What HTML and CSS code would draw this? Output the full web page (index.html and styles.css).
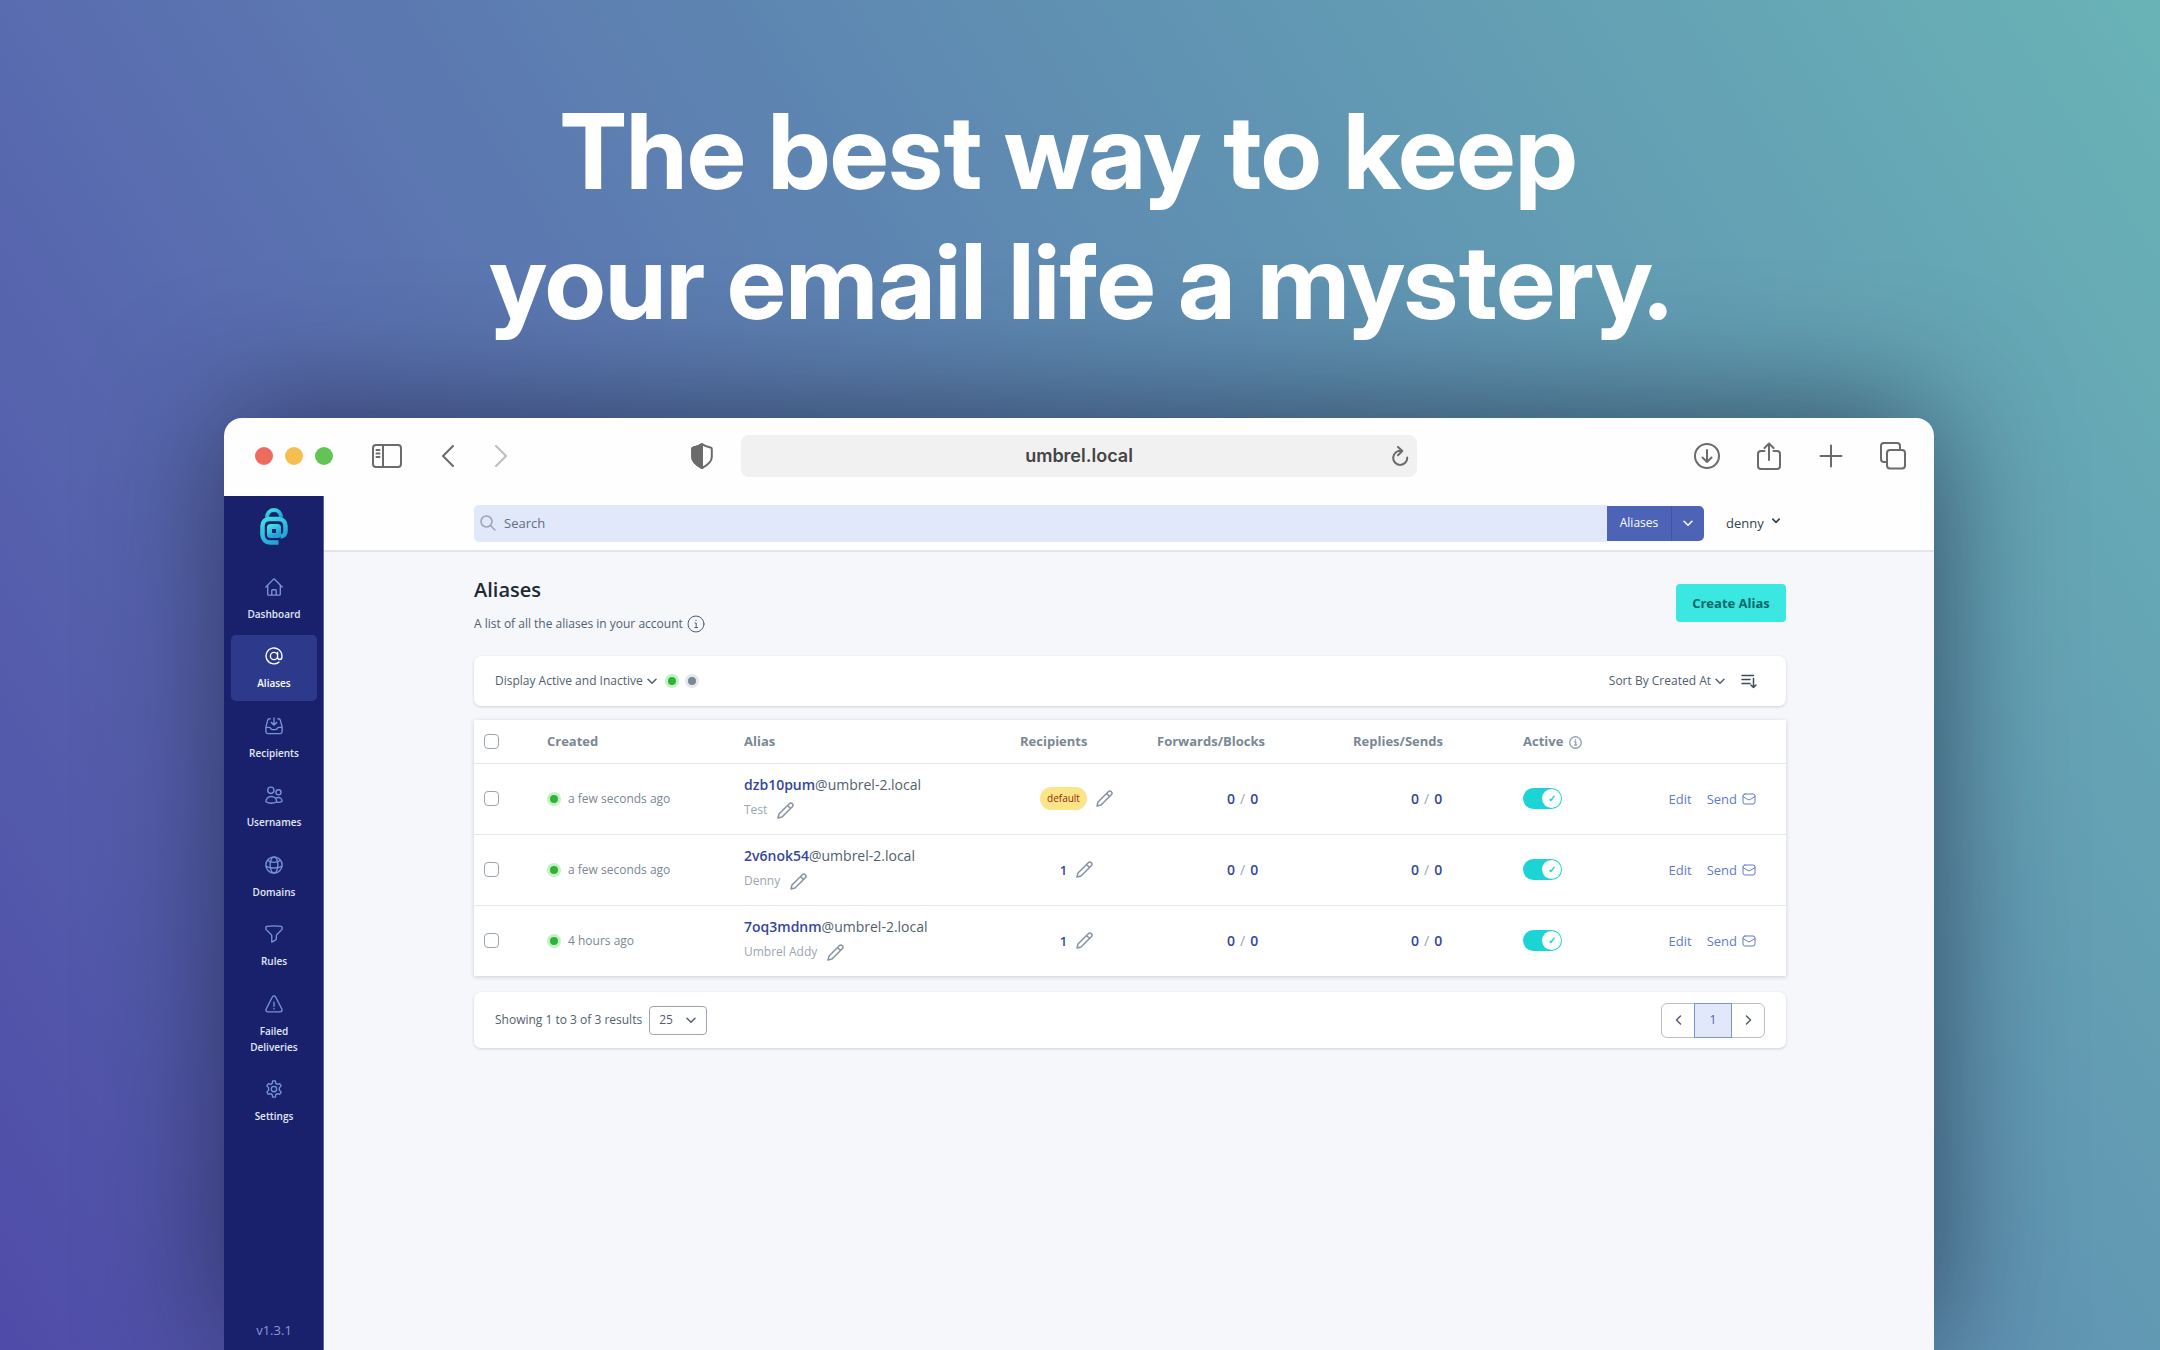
FILE: index.html
```html
<!DOCTYPE html>
<html lang="en">
<head>
<meta charset="utf-8">
<meta name="viewport" content="width=device-width, initial-scale=1">
<title>Aliases</title>
<link rel="stylesheet" href="styles.css">
</head>
<body>
<svg class="sprite" aria-hidden="true">
  <symbol id="pencil" viewBox="0 0 17 17"><path d="M1 16l1-4L12.300 1.700a2 2 0 0 1 3 3L5 15z M11 4l2.300 2.300"/></symbol>
  <symbol id="chevron" viewBox="0 0 10 7"><path d="M1 1.200l4 4 4-4"/></symbol>
  <symbol id="mail" viewBox="0 0 14 12"><rect x="1" y="1" width="12" height="10" rx="2"/><path d="M1 3.500l4.800 3q1.200.7 2.400 0L13 3.500"/></symbol>
  <symbol id="info" viewBox="0 0 18 18"><circle cx="9" cy="9" r="8"/><path d="M8 8h1.200v4.500M7.800 12.500h2.800M9 5.300v.4"/></symbol>
</svg>
<header class="hero">
  <h1 class="headline">The best way to keep&nbsp;<br>your email life a mystery.</h1>
</header>
<div class="browser">
  <div class="toolbar">
    <div class="controls">
      <div class="lights"><i class="light red"></i><i class="light amber"></i><i class="light green"></i></div>
      <div class="nav-buttons">
        <button class="tool" aria-label="Sidebar"><svg width="30" height="24" viewBox="0 0 30 24"><rect x="1" y="1" width="28" height="22" rx="3"/><path d="M11 1v22M4.500 6h3M4.500 9.500h3M4.500 13h3"/></svg></button>
        <button class="tool" aria-label="Back"><svg width="14" height="24" viewBox="0 0 14 24"><path d="M12 2L2 12l10 10"/></svg></button>
        <button class="tool forward" aria-label="Forward"><svg width="14" height="24" viewBox="0 0 14 24"><path d="M2 2l10 10L2 22"/></svg></button>
      </div>
      <button class="tool shield" aria-label="Privacy report"><svg width="22" height="26" viewBox="0 0 22 26"><path d="M11 1.200C8 3.200 5 4 2.500 4.500 1.500 4.700 1.200 5 1.200 6v8c0 5 5 8.500 9.800 11 4.800-2.500 9.800-6 9.800-11V6c0-1-.3-1.300-1.300-1.500C17 4 14 3.200 11 1.200z"/><path class="solid" d="M11 1.200C8 3.200 5 4 2.500 4.500 1.500 4.700 1.200 5 1.200 6v8c0 5 5 8.500 9.800 11z"/></svg></button>
    </div>
    <div class="address">
      <span class="url">umbrel.local</span>
      <button class="tool reload" aria-label="Reload"><svg width="18" height="20" viewBox="0 0 18 20"><path d="M10.500 5A7 7 0 1 0 16.200 11.500M7 1l4.300 4-4.300 4.200"/></svg></button>
    </div>
    <div class="actions">
      <button class="tool" aria-label="Downloads"><svg width="26" height="28" viewBox="0 0 26 28"><circle cx="13" cy="14" r="12"/><path d="M13 8v12M8.500 15.500L13 20l4.500-4.500"/></svg></button>
      <button class="tool" aria-label="Share"><svg width="26" height="28" viewBox="0 0 26 28"><path d="M8.500 9H5a3 3 0 0 0-3 3v12a3 3 0 0 0 3 3h16a3 3 0 0 0 3-3V12a3 3 0 0 0-3-3h-3.500M13 18V1.500M8.500 6L13 1.500 17.500 6"/></svg></button>
      <button class="tool" aria-label="New tab"><svg width="26" height="28" viewBox="0 0 26 28"><path d="M13 3.500v21M2.500 14h21"/></svg></button>
      <button class="tool" aria-label="Tabs"><svg width="26" height="28" viewBox="0 0 26 28"><path d="M7 20H4a3 3 0 0 1-3-3V4a3 3 0 0 1 3-3h13a3 3 0 0 1 3 3v3"/><rect x="7" y="8" width="18" height="18.500" rx="3"/></svg></button>
    </div>
  </div>
  <div class="app">
    <aside class="sidebar">
      <svg class="logo" width="28" height="37" viewBox="0 0 28 37" aria-label="Logo"><defs><linearGradient id="brand" x1="0" y1="0" x2=".6" y2="1"><stop offset="0" stop-color="#40e0e0"/><stop offset="1" stop-color="#22a3d8"/></linearGradient></defs><g stroke="url(#brand)" stroke-linecap="butt"><path stroke-width="4" d="M7 9.500C7 5 10 2 14 2s7 3 7 7.500"/><path stroke-width="4.500" d="M18.500 34.500H10.500C5.500 34.500 2.500 31 2.500 26.500V18c0-4.500 3-7 7-7h9c4.500 0 7 3 7 7v5c0 3.500-2 5.500-5 5.500"/><rect x="9.500" y="18.500" width="9" height="9" rx="1" stroke-width="5"/></g></svg>
      <nav class="menu">
        <a class="item" href="#"><svg viewBox="0 0 20 20"><path d="M1 10l8.300-8.500a1 1 0 0 1 1.400 0L19 10M3 8.200V18a1 1 0 0 0 1 1h12a1 1 0 0 0 1-1V8.200M7.500 19v-5a1 1 0 0 1 1-1h3a1 1 0 0 1 1 1v5"/></svg>Dashboard</a>
        <a class="item current" href="#"><svg viewBox="0 0 20 20"><path d="M14 10a4 4 0 1 1-8 0 4 4 0 0 1 8 0zM14 6v5.500a2.400 2.400 0 0 0 4.800 0V10A8.800 8.800 0 1 0 15.500 16.800"/></svg>Aliases</a>
        <a class="item" href="#"><svg viewBox="0 0 20 20"><path d="M6 2H5a2 2 0 0 0-2 1.500L1 11v5.500a2 2 0 0 0 2 2h14a2 2 0 0 0 2-2V11l-2-7.500A2 2 0 0 0 15 2h-1M10 1v7.500M7 6l3 3 3-3M1 11.500h3.500c1 0 1.500.5 2 1.300s1.200 1.200 2 1.200h3c.8 0 1.500-.4 2-1.200s1-1.300 2-1.300H19"/></svg>Recipients</a>
        <a class="item" href="#"><svg viewBox="0 0 20 20"><circle cx="6.500" cy="4.800" r="3.500"/><circle cx="15" cy="7" r="2.800"/><path d="M1 17.500c0-3.500 2.500-5.800 6-5.800s6 2.300 6 5.800c-3.500 2-8.500 2-12 0zM12.500 13.200c3.500-1.200 6.500.3 6.500 4-1.700 1-4 1.200-6 .8"/></svg>Usernames</a>
        <a class="item" href="#"><svg viewBox="0 0 20 20"><circle cx="10" cy="10" r="9"/><ellipse cx="10" cy="10" rx="4.300" ry="9"/><path d="M1.200 11.500c5 2.400 12.600 2.400 17.600 0M3 5c4.500 2.700 9.500 2.700 14 0"/></svg>Domains</a>
        <a class="item" href="#"><svg viewBox="0 0 20 20"><path d="M10 1c3 0 5.500.2 8 .6.600.1 1 .6 1 1.200v1c0 .7-.3 1.400-.8 1.900l-4.700 4.500c-.6.5-.9 1.200-.9 2v2.800c0 1-.5 1.700-1.400 2.200L7.500 19v-6.800c0-.8-.3-1.500-.9-2L1.800 5.700C1.300 5.200 1 4.500 1 3.800v-1c0-.6.400-1.100 1-1.200C4.500 1.200 7 1 10 1z"/></svg>Rules</a>
        <a class="item" href="#"><svg viewBox="0 0 20 20"><path d="M8.300 2L1.300 15.500C.6 17 1.500 18.800 3.200 18.800h13.600c1.700 0 2.600-1.800 1.900-3.300L11.700 2a2 2 0 0 0-3.400 0zM10 8v4.500M10 15v.5"/></svg>Failed<br>Deliveries</a>
        <a class="item" href="#"><svg viewBox="0 0 20 20"><circle cx="10" cy="10" r="3"/><path d="M8.500 1h3l.5 2.800 1.600 1L16.300 4l1.600 2.500-1.900 2.200v2.600l1.900 2.200-1.600 2.500-2.700-.8-1.600 1-.5 2.800h-3L8 16.200l-1.600-1-2.700.8-1.600-2.500L4 11.300V8.700L2.100 6.500 3.700 4l2.700.8L8 3.800z"/></svg>Settings</a>
      </nav>
      <span class="version">v1.3.1</span>
    </aside>
    <div class="main">
      <div class="topbar">
        <form class="search">
          <label class="field"><svg width="16" height="16" viewBox="0 0 16 16"><circle cx="6.500" cy="6.500" r="5.500"/><path d="M10.500 10.500L15 15"/></svg><input type="text" placeholder="Search" aria-label="Search"></label>
          <button class="scope" type="button">Aliases</button>
          <button class="scope-more" type="button" aria-label="Choose what to search"><svg width="10" height="7"><use href="#chevron"/></svg></button>
        </form>
        <button class="user">denny <svg width="8" height="6"><use href="#chevron"/></svg></button>
      </div>
      <main class="content">
        <div class="page-head">
          <div>
            <h2 class="title">Aliases</h2>
            <p class="subtitle">A list of all the aliases in your account <svg width="18" height="18"><use href="#info"/></svg></p>
          </div>
          <button class="create">Create Alias</button>
        </div>
        <div class="card filters">
          <button class="plain">Display Active and Inactive <svg width="10" height="7"><use href="#chevron"/></svg></button>
          <i class="dot on"></i><i class="dot off"></i>
          <button class="plain sort">Sort By Created At <svg width="10" height="7"><use href="#chevron"/></svg></button>
          <button class="plain order" aria-label="Sort direction"><svg width="16" height="15" viewBox="0 0 16 15"><path d="M1 1.500h11.500M1 5.500h8M1 9.500h8M12.500 4.500v9M10 11l2.500 2.500L15 11"/></svg></button>
        </div>
        <table class="aliases">
          <colgroup><col class="c-check"><col class="c-created"><col class="c-alias"><col class="c-recipients"><col class="c-forwards"><col class="c-replies"><col class="c-active"><col></colgroup>
          <thead><tr>
            <th><input type="checkbox" aria-label="Select all"></th><th>Created</th><th>Alias</th><th>Recipients</th><th>Forwards/Blocks</th><th>Replies/Sends</th>
            <th>Active <svg class="hint" width="13" height="13"><use href="#info"/></svg></th><th></th>
          </tr></thead>
          <tbody>
            <tr>
              <td><input type="checkbox" aria-label="Select dzb10pum"></td>
              <td><span class="when"><i class="dot on"></i>a few seconds ago</span></td>
              <td><div class="address-line"><b>dzb10pum</b>@umbrel-2.local</div><div class="note">Test <svg width="17" height="17"><use href="#pencil"/></svg></div></td>
              <td><span class="people"><span class="badge">default</span><svg width="17" height="17"><use href="#pencil"/></svg></span></td>
              <td class="count"><b>0</b><span>/</span><b>0</b></td><td class="count replies"><b>0</b><span>/</span><b>0</b></td>
              <td><input class="switch" type="checkbox" role="switch" aria-label="Active" checked></td>
              <td><span class="links"><a href="#">Edit</a><a href="#">Send <svg width="14" height="12"><use href="#mail"/></svg></a></span></td>
            </tr>
            <tr>
              <td><input type="checkbox" aria-label="Select 2v6nok54"></td>
              <td><span class="when"><i class="dot on"></i>a few seconds ago</span></td>
              <td><div class="address-line"><b>2v6nok54</b>@umbrel-2.local</div><div class="note">Denny <svg width="17" height="17"><use href="#pencil"/></svg></div></td>
              <td><span class="people"><b>1</b><svg width="17" height="17"><use href="#pencil"/></svg></span></td>
              <td class="count"><b>0</b><span>/</span><b>0</b></td><td class="count replies"><b>0</b><span>/</span><b>0</b></td>
              <td><input class="switch" type="checkbox" role="switch" aria-label="Active" checked></td>
              <td><span class="links"><a href="#">Edit</a><a href="#">Send <svg width="14" height="12"><use href="#mail"/></svg></a></span></td>
            </tr>
            <tr>
              <td><input type="checkbox" aria-label="Select 7oq3mdnm"></td>
              <td><span class="when"><i class="dot on"></i>4 hours ago</span></td>
              <td><div class="address-line"><b>7oq3mdnm</b>@umbrel-2.local</div><div class="note">Umbrel Addy <svg width="17" height="17"><use href="#pencil"/></svg></div></td>
              <td><span class="people"><b>1</b><svg width="17" height="17"><use href="#pencil"/></svg></span></td>
              <td class="count"><b>0</b><span>/</span><b>0</b></td><td class="count replies"><b>0</b><span>/</span><b>0</b></td>
              <td><input class="switch" type="checkbox" role="switch" aria-label="Active" checked></td>
              <td><span class="links"><a href="#">Edit</a><a href="#">Send <svg width="14" height="12"><use href="#mail"/></svg></a></span></td>
            </tr>
          </tbody>
        </table>
        <div class="card pager">
          <label class="summary" for="per-page">Showing 1 to 3 of 3 results</label>
          <span class="select-wrap"><select id="per-page"><option>25</option><option>50</option><option>100</option></select><svg width="10" height="7"><use href="#chevron"/></svg></span>
          <nav class="pages">
            <button aria-label="Previous"><svg width="7" height="10" viewBox="0 0 7 10"><path d="M5.500 1l-4 4 4 4"/></svg></button>
            <button class="here">1</button>
            <button aria-label="Next"><svg width="7" height="10" viewBox="0 0 7 10"><path d="M1.500 1l4 4-4 4"/></svg></button>
          </nav>
        </div>
      </main>
    </div>
  </div>
</div>
</body>
</html>
```
FILE: styles.css
```css
* { box-sizing: border-box; }
html { height: 100%; }
body {
  margin: 0;
  height: 100%;
  display: flex;
  flex-direction: column;
  overflow: hidden;
  font-family: "Open Sans", "Noto Sans", sans-serif;
  font-size: 12px;
  line-height: 16px;
  color: #52606d;
  background: linear-gradient(58deg, #4f4ba8 0%, #5a70b0 32%, #6092b2 65%, #69b3b6 100%);
}
button, input, select { font: inherit; color: inherit; margin: 0; padding: 0; border: 0; background: none; }
svg { fill: none; stroke: currentColor; flex: none; stroke-linecap: round; stroke-linejoin: round; }
a { color: inherit; text-decoration: none; }
.sprite { display: none; }

.hero { position: relative; z-index: 1; padding: 86px 0 72px; }
.headline {
  margin: 0;
  font-family: "Inter Display", Inter, sans-serif;
  font-size: 104px;
  font-weight: 700;
  line-height: 130px;
  text-align: center;
  color: #fff;
}

.browser {
  flex: 1;
  min-height: 0;
  display: flex;
  flex-direction: column;
  margin: 0 226px 0 224px;
  border-radius: 18px 18px 0 0;
  background: #fefefe;
  box-shadow: 0 -4px 130px rgba(20, 25, 50, .64);
  overflow: hidden;
}
.toolbar {
  height: 78px;
  flex: none;
  display: grid;
  grid-template-columns: 1fr 676px 1fr;
  align-items: center;
  gap: 28px;
  padding: 0 28px 2px;
  color: #6b6b6b;
}
.controls { display: flex; align-items: center; padding-left: 3px; }
.tool { display: flex; stroke-width: 2; }
.lights { display: flex; gap: 12px; }
.light { width: 18px; height: 18px; border-radius: 50%; }
.red { background: #ec6a5e; }
.amber { background: #f4bf4f; }
.green { background: #61c454; }
.nav-buttons { display: flex; align-items: center; gap: 39px; margin-left: 39px; }
.forward { color: #bdbdbd; }
.shield { margin-left: auto; }
.solid { fill: currentColor; }
.address { display: flex; align-items: center; height: 42px; padding: 0 8px; border-radius: 8px; background: #f1f1f1; }
.url { flex: 1; padding-left: 18px; font-family: Inter, sans-serif; font-size: 18px; font-weight: 600; text-align: center; color: #444; }
.actions { display: flex; align-items: center; justify-content: flex-end; gap: 36px; }

.app { flex: 1; display: flex; min-height: 0; }
.sidebar {
  width: 100px;
  flex: none;
  display: flex;
  flex-direction: column;
  align-items: center;
  padding: 12px 6px 6px 7px;
  border-right: 1px solid #5a619c;
  background: #19216c;
}
.menu {
  width: 100%;
  height: 568px;
  flex: none;
  margin-top: 21px;
  display: flex;
  flex-direction: column;
  justify-content: space-between;
}
.item {
  display: flex;
  flex-direction: column;
  align-items: center;
  padding: 12px 0 10px;
  border-radius: 5px;
  font-size: 10px;
  font-weight: 600;
  text-align: center;
  color: #e0e8f9;
}
.item svg { width: 18px; height: 18px; margin-bottom: 10px; color: #7b93db; stroke-width: 1.500; }
.item.current, .item.current svg { color: #fff; }
.current { background: #2d3a8c; }
.version { margin-top: auto; font-size: 13px; line-height: 28px; color: #8c96dc; }

.main { flex: 1; min-width: 0; background: #f5f7fb; }
.topbar {
  height: 56px;
  display: flex;
  align-items: center;
  gap: 22px;
  padding: 0 148px 0 150px;
  border-bottom: 2px solid #e1e4ea;
  background: #fefefe;
}
.search { flex: 1; display: flex; align-items: center; }
.field { flex: 1; display: flex; align-items: center; gap: 8px; height: 37px; padding-left: 6px; border-radius: 5px 0 0 5px; background: #e0e8f9; color: #9aa5b1; }
.field svg { stroke-width: 1.500; }
.field input { flex: 1; font-size: 13px; outline: 0; }
.field input::placeholder { color: #616e7c; opacity: 1; }
.scope, .scope-more { height: 35px; background: #4c63b6; color: #fff; }
.scope { width: 64px; font-weight: 500; }
.scope-more { width: 33px; border-left: 1px solid #4055a8; border-radius: 0 5px 5px 0; }
.scope-more svg { stroke-width: 1.500; }
.user { display: flex; align-items: center; gap: 8px; width: 60px; font-size: 13px; color: #323f4b; }
.user svg { margin-bottom: 4px; stroke-width: 2; }

.content { padding: 24px 148px 0 150px; }
.page-head { display: flex; justify-content: space-between; margin-bottom: 22px; }
.title { margin: 0; font-size: 20px; line-height: 28px; font-weight: 600; color: #1f2933; }
.subtitle { display: flex; align-items: center; gap: 4px; margin: 10px 0 0; line-height: 20px; }
.create { width: 110px; height: 38px; margin-top: 8px; border-radius: 4px; background: #3ae7e1; font-size: 13px; font-weight: 700; color: #076869; }

.card { display: flex; align-items: center; padding: 0 21px; border-radius: 7px; background: #fff; box-shadow: 0 1px 3px rgba(30, 40, 70, .18); }
.filters { height: 50px; margin-bottom: 14px; }
.plain { display: flex; align-items: center; gap: 4px; stroke-width: 1.500; }
.dot { width: 14px; height: 14px; border-radius: 50%; border: 3px solid; }
.on { background: #31b237; border-color: #c1f2c7; }
.off { background: #7b8794; border-color: #e4e7eb; }
.filters .dot { margin-left: 8px; }
.filters .off { margin-left: 6px; }
.sort { margin-left: auto; }
.order { margin: 0 8px 0 16px; color: #3e4c59; }

.aliases { width: 100%; table-layout: fixed; border-collapse: collapse; background: #fff; box-shadow: 0 1px 4px rgba(30, 40, 70, .2); }
.c-check { width: 73px; }
.c-created { width: 197px; }
.c-alias { width: 276px; }
.c-recipients { width: 137px; }
.c-forwards { width: 196px; }
.c-replies { width: 170px; }
.c-active { width: 120px; }
.aliases th, .aliases td { padding: 0; text-align: left; }
.aliases th { height: 43px; font-size: 13px; font-weight: 700; color: #7b8794; }
.aliases td { height: 71px; border-top: 1px solid #e4e7eb; }
.aliases input { display: block; }
.aliases input[type="checkbox"]:not(.switch) { appearance: none; width: 15px; height: 15px; margin-left: 10px; border: 1px solid #9aa5b1; border-radius: 4px; background: #fff; }
.hint { vertical-align: -3px; margin-left: 2px; stroke-width: 2; color: #9aa5b1; }
.when { display: flex; align-items: center; gap: 7px; color: #7b8794; }
.address-line { font-size: 14px; line-height: 20px; }
.aliases b { font-weight: 600; color: #35469c; }
.note { display: flex; align-items: center; gap: 10px; margin: 5px 0 2px; line-height: 20px; color: #9aa5b1; }
.note svg, .people svg { stroke-width: 1.500; color: #8793a0; }
.people { display: flex; align-items: center; justify-content: center; gap: 9px; padding-right: 24px; font-size: 13px; color: #9aa5b1; }
.badge { padding: 0 7px; border-radius: 12px; background: #fce588; color: #8d2b0b; font-size: 10px; line-height: 23px; }
.aliases .count { padding-left: 70px; font-size: 14px; color: #9aa5b1; }
.aliases .replies { padding-left: 58px; }
.count span { padding: 0 5px; }
.aliases .switch { appearance: none; display: flex; align-items: center; justify-content: flex-end; width: 39px; height: 21px; padding-right: 1px; border-radius: 11px; background: #1cd4d4; }
.switch::before { content: "✓"; width: 19px; height: 19px; border-radius: 50%; background: #fff; color: #1cd4d4; font-size: 10px; font-weight: 700; line-height: 19px; text-align: center; }
.links { display: flex; justify-content: flex-end; gap: 15px; padding-right: 30px; font-size: 13px; color: #647acb; }
.links a { display: flex; align-items: center; gap: 5px; }

.pager { height: 56px; margin-top: 16px; }
.select-wrap { position: relative; margin-left: 7px; }
.select-wrap svg { position: absolute; right: 11px; top: 11px; stroke-width: 1.500; pointer-events: none; }
.select-wrap select { display: block; appearance: none; width: 58px; height: 29px; padding-left: 9px; border: 1px solid #9aa5b1; border-radius: 4px; }
.pages { display: flex; width: 104px; height: 35px; margin-left: auto; border: 1px solid #b8c0c9; border-radius: 6px; }
.pages button { flex: 1; display: flex; align-items: center; justify-content: center; stroke-width: 1.500; }
.pages .here { flex: none; width: 38px; margin: -1px 0; border: 1px solid #7b93db; background: #e0e8f9; color: #4c63b6; }
```
